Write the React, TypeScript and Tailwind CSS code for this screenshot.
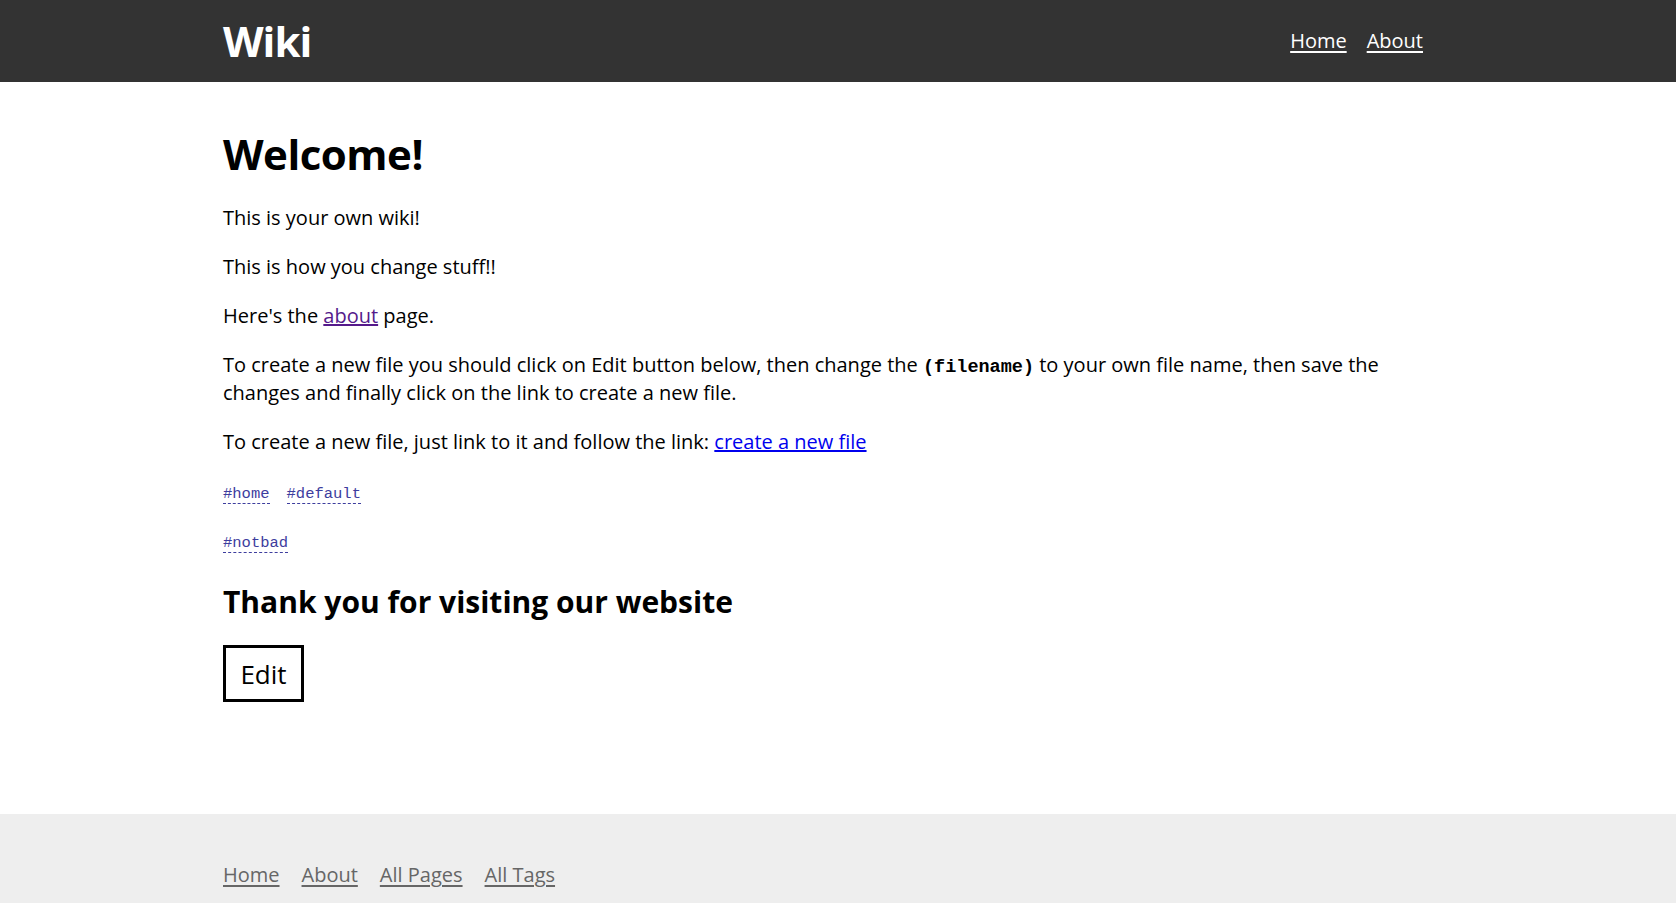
import React from 'react';

const bodyFont = { fontFamily: '"Open Sans", "Noto Sans", sans-serif' };

function Tag({ name }: { name: string }) {
  return (
    <a
      href="#"
      className="border-b border-dashed border-[#3d3d9e] font-['Liberation_Mono',monospace] text-[15.5px] leading-[18px] text-[#3d3d9e] no-underline"
    >
      #{name}
    </a>
  );
}

export default function App() {
  const footerLinks = ['Home', 'About', 'All Pages', 'All Tags'];

  return (
    <div className="min-h-screen bg-white text-black" style={bodyFont}>
      <header className="h-[82px] bg-[#333333]">
        <div className="ml-[223px] flex h-full w-[1200px] items-center justify-between">
          <a href="#" className="text-[42px] font-bold leading-none tracking-[-1px] text-white">
            Wiki
          </a>
          <nav className="flex gap-5 text-[20px] text-white">
            <a href="#" className="underline underline-offset-[3px]">
              Home
            </a>
            <a href="#" className="underline underline-offset-[3px]">
              About
            </a>
          </nav>
        </div>
      </header>

      <main className="ml-[223px] w-[1200px] pb-[112px] pt-[46px] text-[20px] leading-[28px]">
        <h1 className="mb-[24px] text-[42px] font-bold leading-[52px] tracking-[-0.5px]">Welcome!</h1>
        <p className="mb-[21px]">This is your own wiki!</p>
        <p className="mb-[21px]">This is how you change stuff!!</p>
        <p className="mb-[21px]">
          Here's the{' '}
          <a href="#" className="text-[#551a8b] underline">
            about
          </a>{' '}
          page.
        </p>
        <p className="mb-[21px]">
          To create a new file you should click on Edit button below, then change the{' '}
          <code className="font-['Liberation_Mono',monospace] text-[18.5px] font-bold leading-none">(filename)</code>{' '}
          to your own file name, then save the changes and finally click on the link to create a new file.
        </p>
        <p className="mb-[21px]">
          To create a new file, just link to it and follow the link:{' '}
          <a href="#" className="text-[#0000ee] underline">
            create a new file
          </a>
        </p>
        <div className="mb-[21px] flex h-[28px] items-center gap-[17px] pt-[6px]">
          <Tag name="home" />
          <Tag name="default" />
        </div>
        <div className="mb-[30px] flex h-[28px] items-center pt-[6px]">
          <Tag name="notbad" />
        </div>
        <h2 className="mb-[25px] text-[30px] font-bold leading-[36px]">Thank you for visiting our website</h2>
        <button
          type="button"
          className="h-[57px] w-[81px] border-[3px] border-black bg-white text-[26px] leading-none text-black"
        >
          Edit
        </button>
      </main>

      <footer className="bg-[#eeeeee] pb-12 pt-[47px]">
        <div className="ml-[223px] flex w-[1200px] gap-[22px] text-[20px] leading-[28px]">
          {footerLinks.map((l) => (
            <a key={l} href="#" className="text-[#666666] underline underline-offset-[3px]">
              {l}
            </a>
          ))}
        </div>
      </footer>
    </div>
  );
}
